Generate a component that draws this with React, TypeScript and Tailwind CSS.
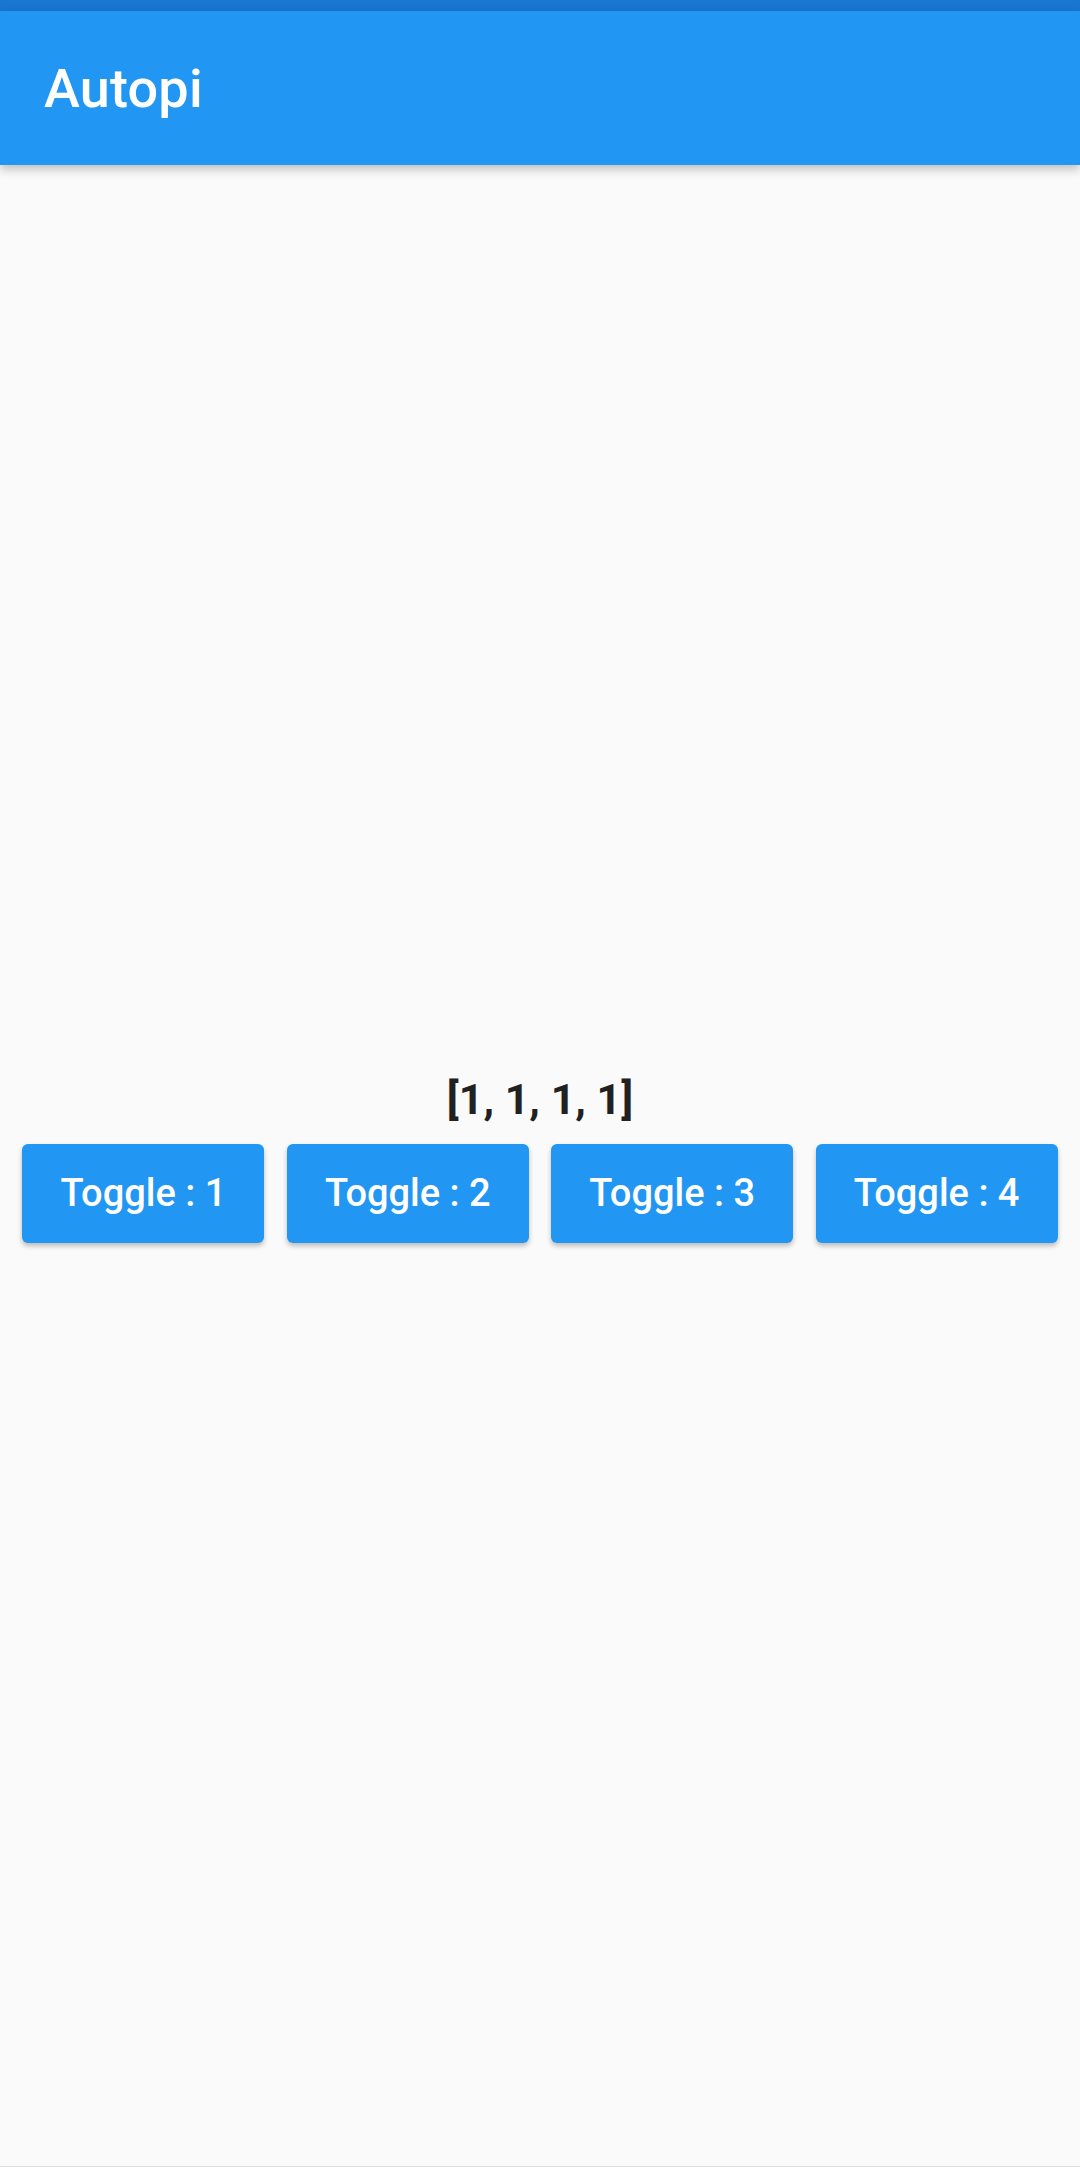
import React from 'react';

const toggles = [1, 2, 3, 4];

export default function App() {
  return (
    <div className="flex flex-col w-[1080px] h-[2167px] bg-[#fafafa] font-['Roboto',sans-serif] border-b border-[#e0e0e0]">
      <div className="h-[11px] bg-[#1976d2] shrink-0" />
      <header className="relative z-10 h-[154px] shrink-0 bg-[#2196f3] flex items-center px-[44px] pt-[2px] shadow-[0_4px_10px_rgba(0,0,0,0.25)]">
        <h1 className="text-white text-[54px] font-medium leading-none tracking-[0.2px]">Autopi</h1>
      </header>

      <main className="flex-1 flex flex-col items-center justify-center">
        <p className="text-[#212121] text-[43px] font-bold leading-[54px]">[1, 1, 1, 1]</p>
        <div className="w-full flex justify-evenly mt-[18px] mb-[16px]">
          {toggles.map((n) => (
            <button
              key={n}
              className="w-[242px] h-[99px] bg-[#2196f3] rounded-[6px] text-white text-[38px] font-medium shadow-[0_3px_5px_rgba(0,0,0,0.25)]"
            >
              Toggle : {n}
            </button>
          ))}
        </div>
      </main>
    </div>
  );
}
